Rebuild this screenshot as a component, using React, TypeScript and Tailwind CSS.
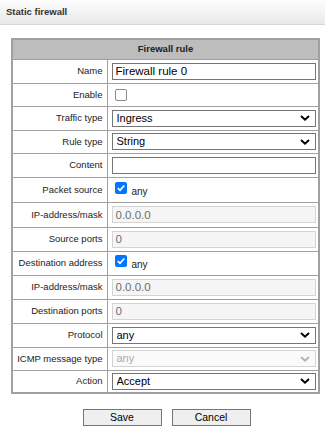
import React from "react";

const font = { fontFamily: '"Liberation Sans", Arial, sans-serif' };

function Chevron({ disabled }: { disabled?: boolean }) {
  return (
    <svg
      className="pointer-events-none absolute right-[6px] top-1/2 -translate-y-1/2"
      width="10"
      height="7"
      viewBox="0 0 10 7"
    >
      <path
        d="M1 1.5 L5 5.2 L9 1.5"
        fill="none"
        stroke={disabled ? "#b4b4b4" : "#000"}
        strokeWidth="2"
      />
    </svg>
  );
}

function Select({ value, disabled }: { value: string; disabled?: boolean }) {
  return (
    <div className="relative w-[204px]">
      <select
        disabled={disabled}
        defaultValue={value}
        className={
          "block h-[17px] w-full appearance-none border pl-[4px] text-[11px] leading-[15px] outline-none " +
          (disabled
            ? "border-[#d4d4d4] bg-[#fafafa] text-[#a8a8a8]"
            : "border-[#767676] bg-white text-black")
        }
        style={font}
      >
        <option>{value}</option>
      </select>
      <Chevron disabled={disabled} />
    </div>
  );
}

function TextInput({ value, disabled }: { value: string; disabled?: boolean }) {
  return (
    <input
      readOnly
      disabled={disabled}
      defaultValue={value}
      className={
        "block h-[17px] w-[204px] border px-[3px] text-[11.5px] leading-[15px] outline-none " +
        (disabled
          ? "border-[#d4d4d4] bg-[#f5f5f5] text-[#6d6d6d]"
          : "border-[#767676] bg-white text-black")
      }
      style={font}
    />
  );
}

function Check({ checked }: { checked?: boolean }) {
  if (!checked)
    return (
      <span className="inline-block h-[12px] w-[12px] rounded-[2px] border border-[#8a8a8a] bg-white" />
    );
  return (
    <span className="inline-flex h-[12px] w-[12px] items-center justify-center rounded-[2px] bg-[#0075ff]">
      <svg width="10" height="10" viewBox="0 0 10 10">
        <path d="M1.8 5.2 L4 7.3 L8.3 2.5" fill="none" stroke="#fff" strokeWidth="1.8" />
      </svg>
    </span>
  );
}

function CheckAny() {
  return (
    <div className="flex items-start gap-[5px] pl-[3px]">
      <span className="mt-[-1px] flex">
        <Check checked />
      </span>
      <span className="mt-[3px] text-[10px] leading-[11px] text-[#222]">any</span>
    </div>
  );
}

type Row = { label: string; cell: React.ReactNode; h: string };

const rows: Row[] = [
  { label: "Name", cell: <TextInput value="Firewall rule 0" />, h: "h-[24px]" },
  { label: "Enable", cell: <div className="flex pl-[3px]"><Check /></div>, h: "h-[23px]" },
  { label: "Traffic type", cell: <Select value="Ingress" />, h: "h-[24px]" },
  { label: "Rule type", cell: <Select value="String" />, h: "h-[23px]" },
  { label: "Content", cell: <TextInput value="" />, h: "h-[24px]" },
  { label: "Packet source", cell: <CheckAny />, h: "h-[25px]" },
  { label: "IP-address/mask", cell: <TextInput value="0.0.0.0" disabled />, h: "h-[25px]" },
  { label: "Source ports", cell: <TextInput value="0" disabled />, h: "h-[24px]" },
  { label: "Destination address", cell: <CheckAny />, h: "h-[24px]" },
  { label: "IP-address/mask", cell: <TextInput value="0.0.0.0" disabled />, h: "h-[24px]" },
  { label: "Destination ports", cell: <TextInput value="0" disabled />, h: "h-[24px]" },
  { label: "Protocol", cell: <Select value="any" />, h: "h-[24px]" },
  { label: "ICMP message type", cell: <Select value="any" disabled />, h: "h-[23px]" },
  { label: "Action", cell: <Select value="Accept" />, h: "h-[23px]" },
];

export default function App() {
  return (
    <div className="h-[432px] w-[325px] overflow-hidden bg-white text-[#222]" style={font}>
      <div className="flex h-[25px] items-center border-b border-[#d6d6d6] bg-gradient-to-b from-[#fdfdfd] to-[#e9e9e9] pl-[6px]">
        <span className="text-[9.5px] font-bold text-[#333]">Static firewall</span>
      </div>

      <div className="ml-[11px] mt-[13px] w-[309px]">
        <table className="w-full table-fixed border-collapse border-2 border-[#a0a0a0] text-[9.5px]">
          <colgroup>
            <col className="w-[95px]" />
            <col />
          </colgroup>
          <thead>
            <tr>
              <th
                colSpan={2}
                className="h-[20px] border border-[#a0a0a0] bg-[#bdbdbd] text-center text-[9.5px] font-bold text-[#222]"
              >
                Firewall rule
              </th>
            </tr>
          </thead>
          <tbody>
            {rows.map((r, i) => (
              <tr key={i} className={r.h}>
                <td className="border border-[#a0a0a0] pr-[4px] text-right align-middle leading-[12px] whitespace-nowrap">
                  {r.label}
                </td>
                <td className="border border-[#a0a0a0] pl-[4px] align-middle">{r.cell}</td>
              </tr>
            ))}
          </tbody>
        </table>

        <div className="mt-[15px] flex justify-center gap-[10px] pl-[2px]">
          <button className="h-[17px] w-[79px] border border-[#767676] bg-[#efefef] text-[10.5px] leading-[15px] text-black">
            Save
          </button>
          <button className="h-[17px] w-[79px] border border-[#767676] bg-[#efefef] text-[10.5px] leading-[15px] text-black">
            Cancel
          </button>
        </div>
      </div>
    </div>
  );
}
